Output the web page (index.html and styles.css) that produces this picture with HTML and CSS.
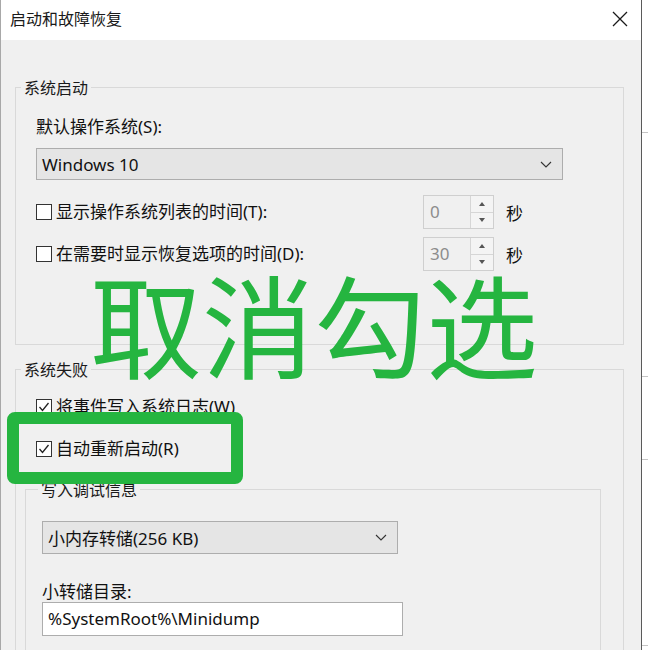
FILE: index.html
```html
<!DOCTYPE html>
<html lang="zh-CN">
<head>
<meta charset="utf-8">
<title>启动和故障恢复</title>
<link rel="stylesheet" href="styles.css">
</head>
<body>
<div class="screen">
  <div class="dialog">
    <div class="titlebar">
      <span class="title">启动和故障恢复</span>
      <svg class="close" width="16" height="16" viewBox="0 0 16 16"><path d="M1 1 L15 15 M15 1 L1 15" stroke="#1a1a1a" stroke-width="1.3" fill="none"/></svg>
    </div>
    <div class="content">
      <div class="group g1">
        <span class="legend">系统启动</span>
        <div class="label first">默认操作系统(S):</div>
        <div class="select wide">
          <span>Windows 10</span>
          <svg width="12" height="7" viewBox="0 0 12 7"><path d="M1 1 L6 6 L11 1" stroke="#333" stroke-width="1.1" fill="none"/></svg>
        </div>
        <div class="rows">
          <div class="row">
            <label class="check"><span class="box"></span><span>显示操作系统列表的时间(T):</span></label>
            <div class="spin">
              <span class="val">0</span>
              <div class="btns">
                <span class="btn"><i class="up"></i></span>
                <span class="btn"><i class="down"></i></span>
              </div>
            </div>
            <span class="unit">秒</span>
          </div>
          <div class="row">
            <label class="check"><span class="box"></span><span>在需要时显示恢复选项的时间(D):</span></label>
            <div class="spin">
              <span class="val">30</span>
              <div class="btns">
                <span class="btn"><i class="up"></i></span>
                <span class="btn"><i class="down"></i></span>
              </div>
            </div>
            <span class="unit">秒</span>
          </div>
        </div>
      </div>

      <div class="group g2">
        <span class="legend">系统失败</span>
        <label class="check c1"><span class="box"><svg width="14" height="14" viewBox="0 0 14 14"><path d="M2.5 7 L5.5 10.5 L11.5 3" stroke="#222" stroke-width="1.3" fill="none"/></svg></span><span>将事件写入系统日志(W)</span></label>
        <label class="check c2"><span class="box"><svg width="14" height="14" viewBox="0 0 14 14"><path d="M2.5 7 L5.5 10.5 L11.5 3" stroke="#222" stroke-width="1.3" fill="none"/></svg></span><span>自动重新启动(R)</span></label>

        <div class="group g3">
          <span class="legend">写入调试信息</span>
          <div class="select small">
            <span>小内存转储(256 KB)</span>
            <svg width="12" height="7" viewBox="0 0 12 7"><path d="M1 1 L6 6 L11 1" stroke="#333" stroke-width="1.1" fill="none"/></svg>
          </div>
          <div class="label dir">小转储目录:</div>
          <div class="input">%SystemRoot%\Minidump</div>
        </div>
      </div>
    </div>

    <div class="big">取消勾选</div>
    <div class="highlight"></div>
  </div>
  <div class="side"></div>
</div>
</body>
</html>
```
FILE: styles.css
```css
html, body {
  margin: 0;
  padding: 0;
  background: #fff;
}
body {
  font-family: "Noto Sans", "Noto Sans CJK SC", sans-serif;
  color: #111;
  font-size: 17px;
}
.screen {
  display: flex;
  width: 648px;
  height: 650px;
  overflow: hidden;
}
.dialog {
  position: relative;
  width: 642px;
  height: 650px;
  flex: 0 0 642px;
  box-sizing: border-box;
  border-left: 1px solid #a8a8a8;
  border-right: 1px solid #5a5a5a;
  background: #f0f0f0;
  overflow: hidden;
}
.side {
  flex: 1;
  background:
    linear-gradient(#c4c4c4, #c4c4c4) 0 132px / 100% 1px no-repeat,
    linear-gradient(#c4c4c4, #c4c4c4) 0 376px / 100% 1px no-repeat,
    linear-gradient(#c4c4c4, #c4c4c4) 0 459px / 100% 1px no-repeat,
    linear-gradient(#c4c4c4, #c4c4c4) 0 645px / 100% 1px no-repeat,
    #fff;
}
.titlebar {
  height: 40px;
  background: #fff;
  display: flex;
  align-items: center;
  justify-content: space-between;
  padding: 0 13px 0 9px;
}
.title {
  font-family: "Noto Sans CJK SC", sans-serif;
  font-size: 16px;
  color: #1a1a1a;
  margin-top: -4px;
}
.close {
  margin-top: -2px;
}
.content {
  padding: 47px 17px 0 14px;
}
.group {
  border: 1px solid #d9d9d9;
  padding: 0 20px;
}
.legend {
  display: block;
  width: fit-content;
  margin: -11px 0 0 -15px;
  padding: 0 3px;
  background: #f0f0f0;
  line-height: 20px;
  font-family: "Noto Sans CJK SC", sans-serif;
  font-size: 16px;
  color: #1a1a1a;
}
.g1 {
  padding-bottom: 73px;
}
.label {
  line-height: 20px;
  font-family: "Noto Sans", "Noto Sans CJK SC", sans-serif;
}
.label.first {
  margin-top: 20px;
}
.select {
  box-sizing: border-box;
  height: 32px;
  background: #e5e5e5;
  border: 1px solid #adadad;
  display: flex;
  align-items: center;
  justify-content: space-between;
  padding: 0 10px 0 5px;
}
.select.wide {
  margin-top: 11px;
  width: 527px;
}
.rows {
  margin-top: 15px;
  display: flex;
  flex-direction: column;
  gap: 8px;
}
.row {
  height: 34px;
  display: flex;
  align-items: center;
}
.row .check {
  flex: 0 0 387px;
}
.check {
  display: flex;
  align-items: center;
  gap: 4px;
  line-height: 20px;
}
.box {
  width: 14px;
  height: 14px;
  border: 1px solid #333;
  background: #fff;
  display: flex;
  align-items: center;
  justify-content: center;
  flex: 0 0 auto;
}
.spin {
  box-sizing: border-box;
  width: 71px;
  height: 100%;
  border: 1px solid #cfcfcf;
  background: #f0f0f0;
  display: flex;
  justify-content: space-between;
}
.val {
  color: #8c8c8c;
  padding-left: 6px;
  line-height: 32px;
}
.btns {
  width: 22px;
  display: flex;
  flex-direction: column;
  border-left: 1px solid #d6d6d6;
}
.btn {
  flex: 1;
  display: flex;
  align-items: center;
  justify-content: center;
  background: #f4f4f4;
}
.btn + .btn {
  border-top: 1px solid #d6d6d6;
}
.up, .down {
  width: 0;
  height: 0;
  border-left: 3px solid transparent;
  border-right: 3px solid transparent;
}
.up { border-bottom: 4px solid #555; }
.down { border-top: 4px solid #555; }
.unit {
  margin-left: 12px;
  font-family: "Noto Sans CJK SC", sans-serif;
}
.g2 {
  margin-top: 24px;
  height: 400px;
}
.c1 { margin-top: 18px; }
.c2 { margin-top: 22px; }
.g3 {
  margin: 30px 2px 0 -11px;
  padding: 0 16px;
  height: 300px;
}
.g3 .legend {
  margin-left: -4px;
}
.select.small {
  margin-top: 22px;
  width: 356px;
  height: 33px;
}
.label.dir {
  margin-top: 28px;
}
.input {
  box-sizing: border-box;
  width: 361px;
  height: 34px;
  background: #fff;
  border: 1px solid #adadad;
  padding: 0 5px;
  line-height: 32px;
}
.big {
  position: absolute;
  left: 89px;
  top: 277px;
  font-family: "Noto Sans CJK SC", sans-serif;
  font-size: 112px;
  line-height: 90px;
  color: #25b540;
  white-space: nowrap;
}
.highlight {
  position: absolute;
  left: 6px;
  top: 412px;
  width: 236px;
  height: 72px;
  box-sizing: border-box;
  border: 12px solid #25b540;
  border-radius: 8px;
}
```
